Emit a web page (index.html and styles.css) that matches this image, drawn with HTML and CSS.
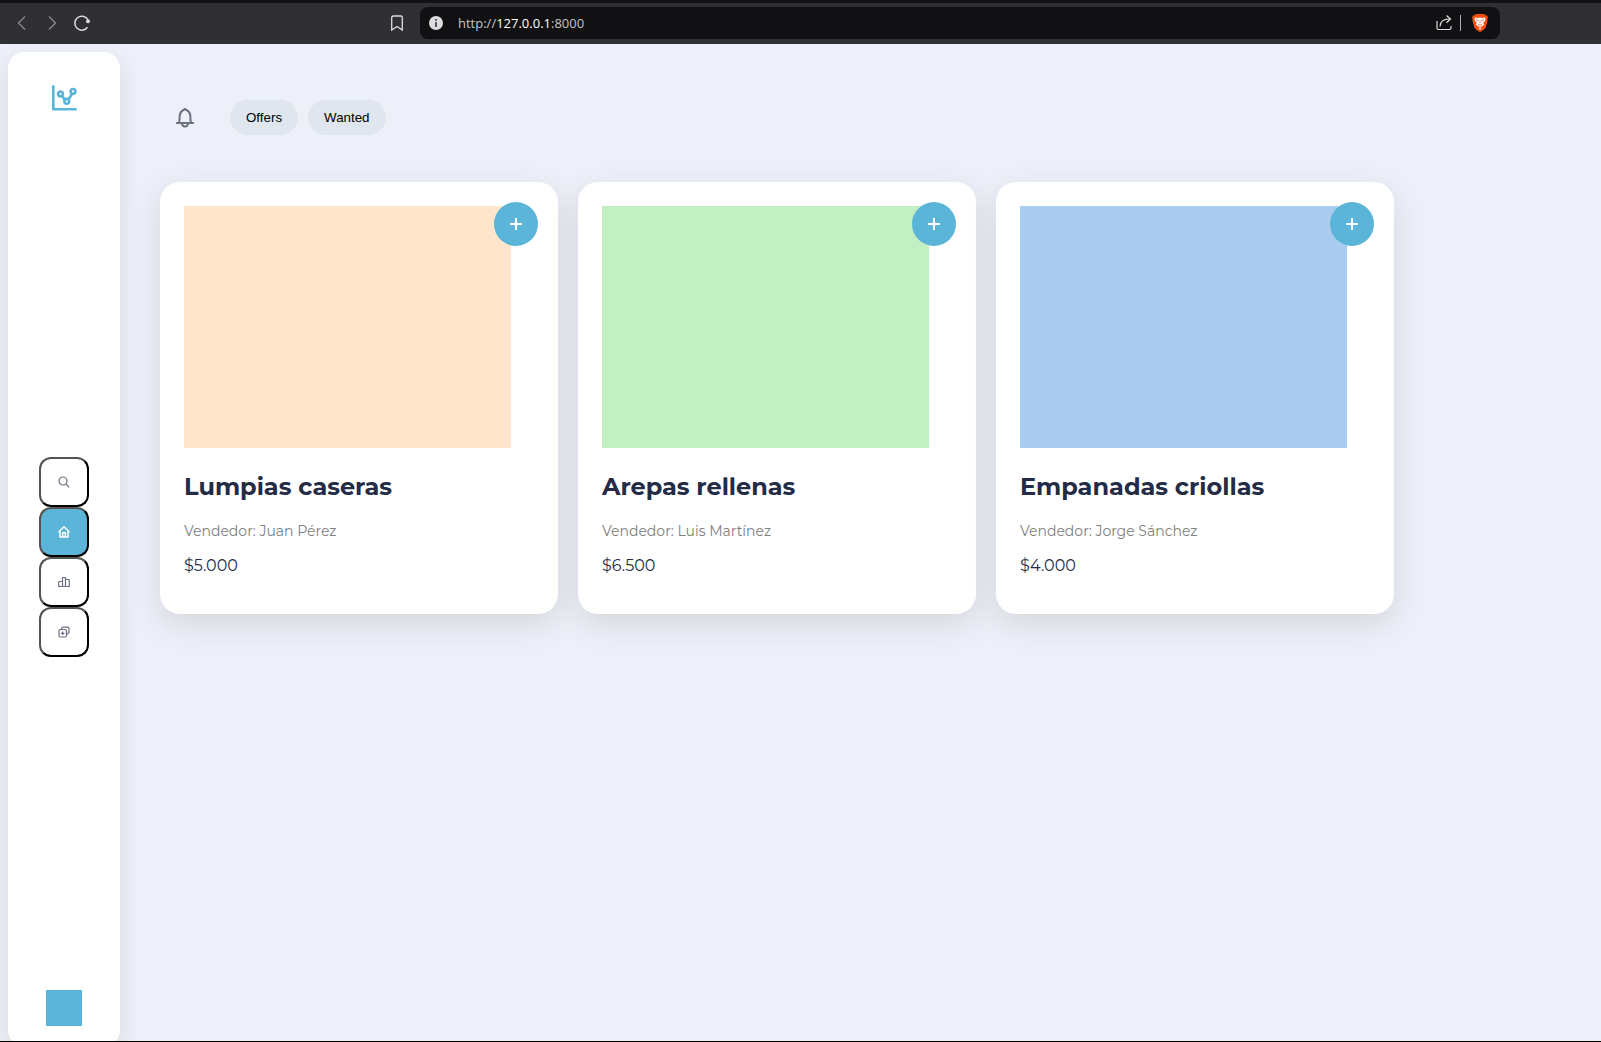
FILE: index.html
```
<!DOCTYPE html>
<html lang="es">
<head>
<meta charset="utf-8">
<title>Offers</title>
<link rel="stylesheet" href="styles.css">
</head>
<body>
<header class="browser">
  <div class="browser-nav">
    <button class="tool dim" aria-label="Back"><svg width="20" height="20" viewBox="0 0 20 20"><path d="M13 3.500 6.500 10l6.500 6.500"/></svg></button>
    <button class="tool dim" aria-label="Forward"><svg width="20" height="20" viewBox="0 0 20 20"><path d="M7 3.500 13.500 10 7 16.500"/></svg></button>
    <button class="tool" aria-label="Reload"><svg width="20" height="20" viewBox="0 0 20 20"><path d="M15.500 14.300A7 7 0 1 1 15.800 6.500" stroke-width="1.500"/><circle class="solid" cx="16" cy="8.300" r="2"/></svg></button>
  </div>
  <button class="tool bookmark" aria-label="Bookmark"><svg width="20" height="20" viewBox="0 0 20 20"><path d="M4.700 17V4.500Q4.700 3 6.200 3h7.600q1.500 0 1.500 1.500V17L10 13.500z" stroke-width="1.300"/></svg></button>
  <div class="address">
    <svg class="info" width="14" height="14" viewBox="0 0 14 14"><circle cx="7" cy="7" r="7" fill="#dedee0" stroke="none"/><path d="M7 6v5M7 3v1.700" stroke="#333238" stroke-width="1.600"/></svg>
    <span class="url">http://<b>127.0.0.1</b>:8000</span>
    <button class="tool" aria-label="Share"><svg width="20" height="20" viewBox="0 0 20 20"><path d="M3 8v7q0 1.500 1.500 1.500h11q1.500 0 1.500-1.500v-2M6 13.500c.2-5 3-7.500 9.500-7.500M12.500 2.500 16.500 6l-4 3.700" stroke-width="1.200"/></svg></button>
    <span class="divider"></span>
    <button class="tool" aria-label="Brave Shields"><svg width="16" height="18" viewBox="0 0 16 18"><path d="M4 0h8l1.500 1.500 1.500-.2.900 2.700-.6 1.500.2 1-1.800 7L12 15.500l-4 2.500-4-2.500-1.700-2L.5 6.500l.2-1L.1 4 1 1.300l1.500.2z" fill="#fb4f10" stroke="none"/><path d="m3 3.500 2.500.5L8 3.500l2.500.5 2.500-.5.500 2.500-2.200 3 .7 1.700L8.500 13h-1l-3.500-2.300.7-1.700-2.200-3zM8 13.500l1.500 1L8 15.500l-1.500-1z" fill="#fff" stroke="none"/><path d="m4 5.700 2.700.8M12 5.700l-2.700.8M8 7v2.200M6 10l2 1.300 2-1.300" stroke="#fb4f10" stroke-width=".8"/></svg></button>
  </div>
</header>

<div class="page">
  <aside class="sidebar">
    <a class="logo" href="#" aria-label="Home page"><svg width="26" height="26" viewBox="0 0 26 26"><path d="M2.300 1.300v22.900h22.400M11.300 11.200l2.600 3.600M17.600 14.300l3.600-5.600"/><circle cx="9.500" cy="9" r="2.400"/><circle cx="15.700" cy="16.300" r="2.400"/><circle cx="22" cy="6.400" r="2.400"/></svg></a>
    <nav class="menu">
      <button class="menu-item" aria-label="Search"><svg width="12" height="12" viewBox="0 0 12 12"><circle cx="5" cy="5" r="4"/><path d="m8 8 3.300 3.300"/></svg></button>
      <button class="menu-item active" aria-label="Home"><svg width="12" height="12" viewBox="0 0 12 12"><path d="M.5 6 6 .8 11.500 6M2 5v6h8V5M4.700 11V6.800h2.600V11"/></svg></button>
      <button class="menu-item" aria-label="Statistics"><svg width="12" height="12" viewBox="0 0 12 12"><path d="M4.500 10.500v-9h3v9M4.500 5.500h-3q-.8 0-.8.8v4.200h10.600V4.300q0-.8-.8-.8h-3"/></svg></button>
      <button class="menu-item" aria-label="Add"><svg width="12" height="12" viewBox="0 0 12 12"><rect x="1" y="3.500" width="7.500" height="7.500" rx="1.500"/><path d="M3.500 3.500V2.200l1-1H10q1 0 1 1v4.300L8.500 8.500M4.700 5.500v3.600M2.900 7.300h3.600"/></svg></button>
    </nav>
    <div class="avatar"></div>
  </aside>

  <main class="content">
    <div class="toolbar">
      <button class="bell" aria-label="Notifications"><svg width="20" height="22" viewBox="0 0 20 22"><path d="M1.800 16h16.400M3.700 15.800C4.600 14.700 4.600 12.500 4.600 9.500 4.600 6 7 3.500 10 2c3 1.500 5.400 4 5.400 7.500 0 3 0 5.200.9 6.300M7 16.500c.3 4 5.700 4 6 0"/></svg></button>
      <div class="filters">
        <button class="pill">Offers</button>
        <button class="pill">Wanted</button>
      </div>
    </div>
    <section class="cards">
      <article class="card">
        <div class="photo peach"></div>
        <button class="add" aria-label="Add Lumpias caseras"><svg width="12" height="12" viewBox="0 0 12 12"><path d="M0 6h12M6 0v12"/></svg></button>
        <h2>Lumpias caseras</h2>
        <p class="seller">Vendedor: Juan Pérez</p>
        <p class="price">$5.000</p>
      </article>
      <article class="card">
        <div class="photo green"></div>
        <button class="add" aria-label="Add Arepas rellenas"><svg width="12" height="12" viewBox="0 0 12 12"><path d="M0 6h12M6 0v12"/></svg></button>
        <h2>Arepas rellenas</h2>
        <p class="seller">Vendedor: Luis Martínez</p>
        <p class="price">$6.500</p>
      </article>
      <article class="card">
        <div class="photo blue"></div>
        <button class="add" aria-label="Add Empanadas criollas"><svg width="12" height="12" viewBox="0 0 12 12"><path d="M0 6h12M6 0v12"/></svg></button>
        <h2>Empanadas criollas</h2>
        <p class="seller">Vendedor: Jorge Sánchez</p>
        <p class="price">$4.000</p>
      </article>
    </section>
  </main>
</div>
</body>
</html>
```
FILE: styles.css
```
* { box-sizing: border-box; }

body {
  margin: 0;
  height: 100vh;
  display: flex;
  flex-direction: column;
  overflow: hidden;
  background: #edf0f9;
  border-bottom: 1px solid #000;
  font-family: Montserrat, Inter, sans-serif;
  color: #242b45;
}

button { cursor: pointer; }

svg {
  display: block;
  fill: none;
  stroke: currentColor;
}

/* Browser bar */
.browser {
  flex: none;
  display: flex;
  align-items: center;
  height: 44px;
  padding: 0 101px 2px 12px;
  border-top: 3px solid #121214;
  background: #302f34;
}

.browser-nav {
  display: flex;
  gap: 10px;
  width: 375px;
}

.tool {
  padding: 0;
  border: 0;
  background: none;
  color: #dedee0;
}

.tool .solid { fill: currentColor; stroke: none; }
.dim { color: #8a898f; }
.dim svg { stroke-width: 1.3; }
.bookmark { margin-right: 13px; }

.address {
  flex: 1;
  display: flex;
  align-items: center;
  height: 32px;
  padding: 0 12px 0 9px;
  border-radius: 8px;
  background: #111113;
}

.url {
  flex: 1;
  margin-left: 15px;
  font: 13px/20px "Open Sans", sans-serif;
  color: #c4c4c8;
}

.url b { font-weight: 400; color: #fff; }

.divider {
  width: 1px;
  height: 16px;
  margin: 0 11px 0 6px;
  background: #b0b0b4;
}

/* Page */
.page {
  flex: 1;
  min-height: 0;
  display: flex;
}

.sidebar {
  flex: none;
  width: 112px;
  margin: 8px 0 -5px 8px;
  padding: 20px 0;
  display: flex;
  flex-direction: column;
  align-items: center;
  justify-content: space-between;
  border-radius: 16px;
  background: #fff;
  box-shadow: 0 8px 20px rgba(90, 90, 60, 0.15);
}

.logo {
  display: flex;
  align-items: center;
  height: 51px;
  color: #5bb5d8;
}

.logo svg { stroke-width: 2.6; stroke-linecap: round; stroke-linejoin: round; }

.menu { display: flex; flex-direction: column; }

.menu-item {
  display: grid;
  place-items: center;
  width: 50px;
  height: 50px;
  padding: 0;
  border: 2px outset #000;
  border-radius: 12px;
  background: #fff;
  color: #6b7080;
}

.menu-item svg { stroke-width: 1.2; }
.menu-item.active { background: #5bb5d8; color: #fff; }
.menu-item.active svg { stroke-width: 1.5; }

.avatar { width: 36px; height: 36px; background: #5bb5d8; }

.content { flex: 1; padding: 56px 40px; }

.toolbar {
  display: flex;
  align-items: center;
  gap: 35px;
  padding-left: 15px;
}

.bell {
  padding: 0;
  border: 0;
  background: none;
  color: #6b7080;
}

.bell svg { stroke-width: 2; stroke-linecap: round; stroke-linejoin: round; }

.filters { display: flex; gap: 10px; }

.pill {
  height: 35px;
  padding: 0 16px;
  border: 0;
  border-radius: 18px;
  background: #dfe6ed;
  color: #000;
  font-family: "Liberation Sans", Arial, sans-serif;
}

.cards {
  display: flex;
  flex-wrap: wrap;
  gap: 20px;
  margin-top: 47px;
}

.card {
  position: relative;
  width: 398px;
  padding: 24px 24px 38px;
  border-radius: 20px;
  background: #fff;
  box-shadow: 0 10px 30px rgba(90, 94, 70, 0.17);
}

.photo { width: 327px; height: 242px; }
.peach { background: #ffe5cc; }
.green { background: #c2f0c2; }
.blue { background: #aaccf0; }

.add {
  position: absolute;
  top: 20px;
  right: 20px;
  display: grid;
  place-items: center;
  width: 44px;
  height: 44px;
  padding: 0;
  border: 0;
  border-radius: 50%;
  background: #5bb5d8;
  color: #fff;
}

.add svg { stroke-width: 2; }

.card h2 {
  margin: 23px 0 19px;
  font-size: 24px;
  line-height: 32px;
  font-weight: 700;
}

.card p { margin: 0; }

.seller {
  font-size: 14px;
  line-height: 18px;
  color: #808080;
}

.card .price {
  margin-top: 16px;
  font-size: 16px;
  line-height: 20px;
}
```
